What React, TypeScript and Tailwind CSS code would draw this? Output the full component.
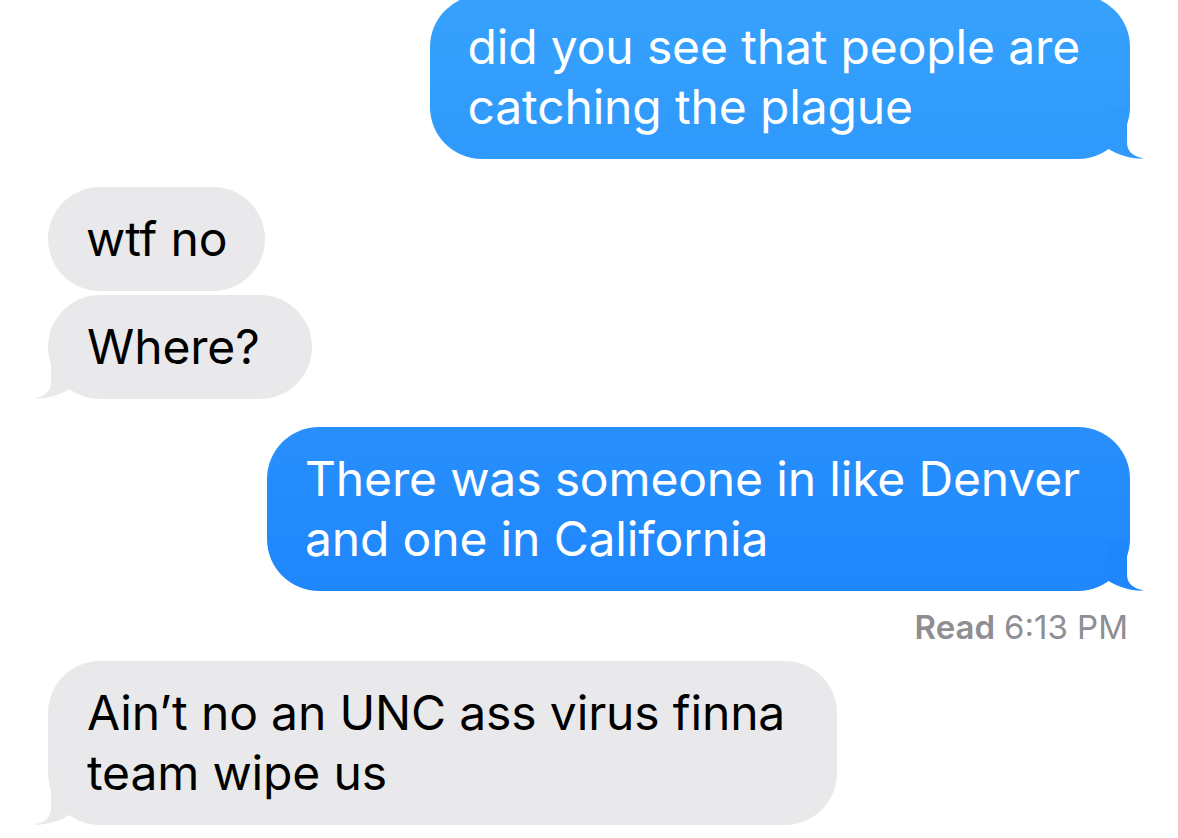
const font = { fontFamily: "Inter, 'Noto Sans', sans-serif" };

type Side = "sent" | "received";

const RightTail = ({ color }: { color: string }) => (
  <svg className="absolute right-[-17px] bottom-0" width="70" height="50" viewBox="0 0 70 50">
    <path d="M50,0 L50,33 C50,42 55,47 67,49.5 C58,50.5 42,47 30,39 L30,0 Z" fill={color} />
  </svg>
);

const LeftTail = ({ color }: { color: string }) => (
  <svg className="absolute left-[-17px] bottom-0" width="70" height="50" viewBox="0 0 70 50">
    <path d="M20,0 L20,33 C20,42 15,47 3,49.5 C12,50.5 28,47 40,39 L40,0 Z" fill={color} />
  </svg>
);

const Bubble = ({
  side,
  lines,
  tail,
  bg,
  tailColor,
}: {
  side: Side;
  lines: string[];
  tail?: boolean;
  bg: string;
  tailColor: string;
}) => {
  const sent = side === "sent";
  return (
    <div className={`flex ${sent ? "justify-end" : "justify-start"}`}>
      <div
        className={`relative rounded-[52px] py-[22px] text-[48px] leading-[60px] tracking-[-0.15px] ${bg} ${
          sent ? "text-white" : "text-black"
        } ${tail ? (sent ? "pl-[38px] pr-[50px]" : "pl-[39px] pr-[52px]") : "px-[38px]"}`}
        style={font}
      >
        {lines.map((l) => (
          <div key={l} className="whitespace-nowrap relative z-10">
            {l}
          </div>
        ))}
        {tail && (sent ? <RightTail color={tailColor} /> : <LeftTail color={tailColor} />)}
      </div>
    </div>
  );
};

export default function App() {
  return (
    <div className="w-[1178px] h-[838px] bg-white overflow-hidden pl-[48px] pr-[48px]" style={font}>
      <div className="mt-[-5px]">
        <Bubble
          side="sent"
          tail
          bg="bg-gradient-to-b from-[#37a2fc] to-[#2f99fc]"
          tailColor="#2f99fc"
          lines={["did you see that people are", "catching the plague"]}
        />
      </div>
      <div className="mt-[28px] flex flex-col gap-[4px]">
        <Bubble side="received" bg="bg-[#e9e9eb]" tailColor="#e9e9eb" lines={["wtf no"]} />
        <Bubble side="received" tail bg="bg-[#e9e9eb]" tailColor="#e9e9eb" lines={["Where?"]} />
      </div>
      <div className="mt-[28px]">
        <Bubble
          side="sent"
          tail
          bg="bg-gradient-to-b from-[#288ffc] to-[#1f87fc]"
          tailColor="#1f87fc"
          lines={["There was someone in like Denver", "and one in California"]}
        />
      </div>
      <div className="flex justify-end mt-[17px] pr-[2px] text-[33px] leading-[38px] text-[#8e8e93]">
        <span className="font-semibold">Read</span>
        <span className="ml-[9px]">6:13 PM</span>
      </div>
      <div className="mt-[15px]">
        <Bubble
          side="received"
          tail
          bg="bg-[#e9e9eb]"
          tailColor="#e9e9eb"
          lines={["Ain’t no an UNC ass virus finna", "team wipe us"]}
        />
      </div>
    </div>
  );
}
